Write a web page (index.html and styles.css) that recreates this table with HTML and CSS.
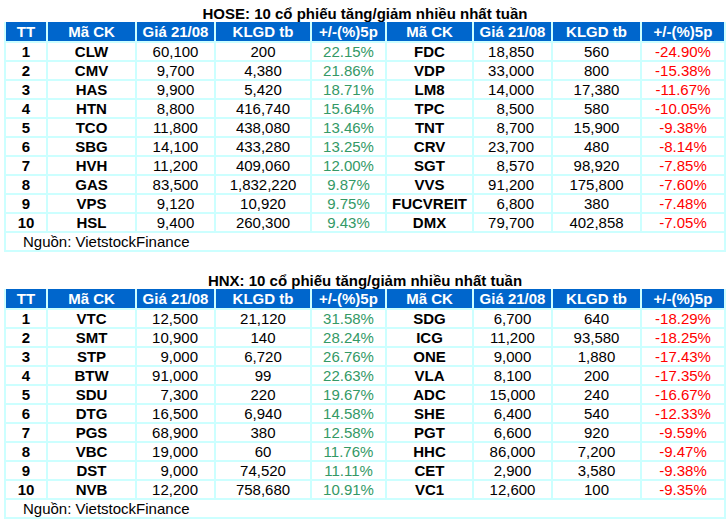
FILE: index.html
```
<!DOCTYPE html>
<html lang="vi">
<head>
<meta charset="utf-8">
<title>Top cổ phiếu tăng/giảm</title>
<link rel="stylesheet" href="styles.css">
</head>
<body>
<div class="page">
  <section class="block">
    <div class="title">HOSE: 10 cổ phiếu tăng/giảm nhiều nhất tuần</div>
    <table class="grid">
      <colgroup>
        <col class="c-tt"><col class="c-ma"><col class="c-gia"><col class="c-kl"><col class="c-pu">
        <col class="c-ma2"><col class="c-gia"><col class="c-kl2"><col class="c-pd">
      </colgroup>
      <thead>
        <tr><th>TT</th><th>Mã CK</th><th>Giá 21/08</th><th>KLGD tb</th><th>+/-(%)5p</th><th>Mã CK</th><th>Giá 21/08</th><th>KLGD tb</th><th>+/-(%)5p</th></tr>
      </thead>
      <tbody>
        <tr><td class="b">1</td><td class="b">CLW</td><td>60,100</td><td>200</td><td class="up">22.15%</td><td class="b">FDC</td><td class="ra">18,850</td><td>560</td><td class="dn">-24.90%</td></tr>
        <tr><td class="b">2</td><td class="b">CMV</td><td>9,700</td><td>4,380</td><td class="up">21.86%</td><td class="b">VDP</td><td class="ra">33,000</td><td>800</td><td class="dn">-15.38%</td></tr>
        <tr><td class="b">3</td><td class="b">HAS</td><td>9,900</td><td>5,420</td><td class="up">18.71%</td><td class="b">LM8</td><td class="ra">14,000</td><td>17,380</td><td class="dn">-11.67%</td></tr>
        <tr><td class="b">4</td><td class="b">HTN</td><td>8,800</td><td>416,740</td><td class="up">15.64%</td><td class="b">TPC</td><td class="ra">8,500</td><td>580</td><td class="dn">-10.05%</td></tr>
        <tr><td class="b">5</td><td class="b">TCO</td><td>11,800</td><td>438,080</td><td class="up">13.46%</td><td class="b">TNT</td><td class="ra">8,700</td><td>15,900</td><td class="dn">-9.38%</td></tr>
        <tr><td class="b">6</td><td class="b">SBG</td><td>14,100</td><td>433,280</td><td class="up">13.25%</td><td class="b">CRV</td><td class="ra">23,700</td><td>480</td><td class="dn">-8.14%</td></tr>
        <tr><td class="b">7</td><td class="b">HVH</td><td>11,200</td><td>409,060</td><td class="up">12.00%</td><td class="b">SGT</td><td class="ra">8,570</td><td>98,920</td><td class="dn">-7.85%</td></tr>
        <tr><td class="b">8</td><td class="b">GAS</td><td>83,500</td><td>1,832,220</td><td class="up">9.87%</td><td class="b">VVS</td><td class="ra">91,200</td><td>175,800</td><td class="dn">-7.60%</td></tr>
        <tr><td class="b">9</td><td class="b">VPS</td><td>9,120</td><td>10,920</td><td class="up">9.75%</td><td class="b">FUCVREIT</td><td class="ra">6,800</td><td>380</td><td class="dn">-7.48%</td></tr>
        <tr><td class="b">10</td><td class="b">HSL</td><td>9,400</td><td>260,300</td><td class="up">9.43%</td><td class="b">DMX</td><td class="ra">79,700</td><td>402,858</td><td class="dn">-7.05%</td></tr>
        <tr><td class="src" colspan="9">Nguồn: VietstockFinance</td></tr>
      </tbody>
    </table>
  </section>

  <section class="block second">
    <div class="title">HNX: 10 cổ phiếu tăng/giảm nhiều nhất tuần</div>
    <table class="grid">
      <colgroup>
        <col class="c-tt"><col class="c-ma"><col class="c-gia"><col class="c-kl"><col class="c-pu">
        <col class="c-ma2"><col class="c-gia"><col class="c-kl2"><col class="c-pd">
      </colgroup>
      <thead>
        <tr><th>TT</th><th>Mã CK</th><th>Giá 21/08</th><th>KLGD tb</th><th>+/-(%)5p</th><th>Mã CK</th><th>Giá 21/08</th><th>KLGD tb</th><th>+/-(%)5p</th></tr>
      </thead>
      <tbody>
        <tr><td class="b">1</td><td class="b">VTC</td><td class="ra2">12,500</td><td>21,120</td><td class="up">31.58%</td><td class="b">SDG</td><td>6,700</td><td>640</td><td class="dn">-18.29%</td></tr>
        <tr><td class="b">2</td><td class="b">SMT</td><td class="ra2">10,900</td><td>140</td><td class="up">28.24%</td><td class="b">ICG</td><td>11,200</td><td>93,580</td><td class="dn">-18.25%</td></tr>
        <tr><td class="b">3</td><td class="b">STP</td><td class="ra2">9,000</td><td>6,720</td><td class="up">26.76%</td><td class="b">ONE</td><td>9,000</td><td>1,880</td><td class="dn">-17.43%</td></tr>
        <tr><td class="b">4</td><td class="b">BTW</td><td class="ra2">91,000</td><td>99</td><td class="up">22.63%</td><td class="b">VLA</td><td>8,100</td><td>200</td><td class="dn">-17.35%</td></tr>
        <tr><td class="b">5</td><td class="b">SDU</td><td class="ra2">7,300</td><td>220</td><td class="up">19.67%</td><td class="b">ADC</td><td>15,000</td><td>240</td><td class="dn">-16.67%</td></tr>
        <tr><td class="b">6</td><td class="b">DTG</td><td class="ra2">16,500</td><td>6,940</td><td class="up">14.58%</td><td class="b">SHE</td><td>6,400</td><td>540</td><td class="dn">-12.33%</td></tr>
        <tr><td class="b">7</td><td class="b">PGS</td><td class="ra2">68,900</td><td>380</td><td class="up">12.58%</td><td class="b">PGT</td><td>6,600</td><td>920</td><td class="dn">-9.59%</td></tr>
        <tr><td class="b">8</td><td class="b">VBC</td><td class="ra2">19,000</td><td>60</td><td class="up">11.76%</td><td class="b">HHC</td><td>86,000</td><td>7,200</td><td class="dn">-9.47%</td></tr>
        <tr><td class="b">9</td><td class="b">DST</td><td class="ra2">9,000</td><td>74,520</td><td class="up">11.11%</td><td class="b">CET</td><td>2,900</td><td>3,580</td><td class="dn">-9.38%</td></tr>
        <tr><td class="b">10</td><td class="b">NVB</td><td class="ra2">12,200</td><td>758,680</td><td class="up">10.91%</td><td class="b">VC1</td><td>12,600</td><td>100</td><td class="dn">-9.35%</td></tr>
        <tr><td class="src" colspan="9">Nguồn: VietstockFinance</td></tr>
      </tbody>
    </table>
  </section>
</div>
</body>
</html>
```

FILE: styles.css
```
html, body {
  margin: 0;
  padding: 0;
  background: #ffffff;
}

body {
  font-family: "Liberation Sans", Arial, sans-serif;
  font-size: 15px;
  color: #000000;
}

.page {
  width: 722px;
  padding-left: 4px;
}

.block.second {
  margin-top: 15px;
}

.title {
  box-sizing: border-box;
  height: 22px;
  padding-top: 6px;
  line-height: 16px;
  font-weight: bold;
  text-align: center;
  white-space: nowrap;
}

.grid {
  width: 722px;
  table-layout: fixed;
  border-collapse: separate;
  border-spacing: 0;
}

.c-tt  { width: 44px; }
.c-ma  { width: 89px; }
.c-gia { width: 79px; }
.c-kl  { width: 96px; }
.c-pu  { width: 75px; }
.c-ma2 { width: 87px; }
.c-kl2 { width: 89px; }
.c-pd  { width: 84px; }

.grid th,
.grid td {
  padding: 0;
  text-align: center;
  white-space: nowrap;
  overflow: hidden;
  border-right: 2px solid #ccffff;
  border-bottom: 2px solid #ccffff;
}

.grid th:first-child,
.grid td:first-child {
  border-left: 2px solid #ccffff;
}

.grid th {
  background: #0066cc;
  color: #ffffff;
  font-weight: bold;
  height: 19px;
  line-height: 19px;
}

.grid td {
  height: 17px;
  line-height: 17px;
}

.grid td.b {
  font-weight: bold;
}

.grid td.ra {
  text-align: right;
  padding-right: 17px;
}

.grid td.ra2 {
  text-align: right;
  padding-right: 16px;
}

.grid td.up {
  color: #339966;
}

.grid td.dn {
  color: #ff0000;
}

.grid td.src {
  text-align: left;
  padding-left: 17px;
}
```
